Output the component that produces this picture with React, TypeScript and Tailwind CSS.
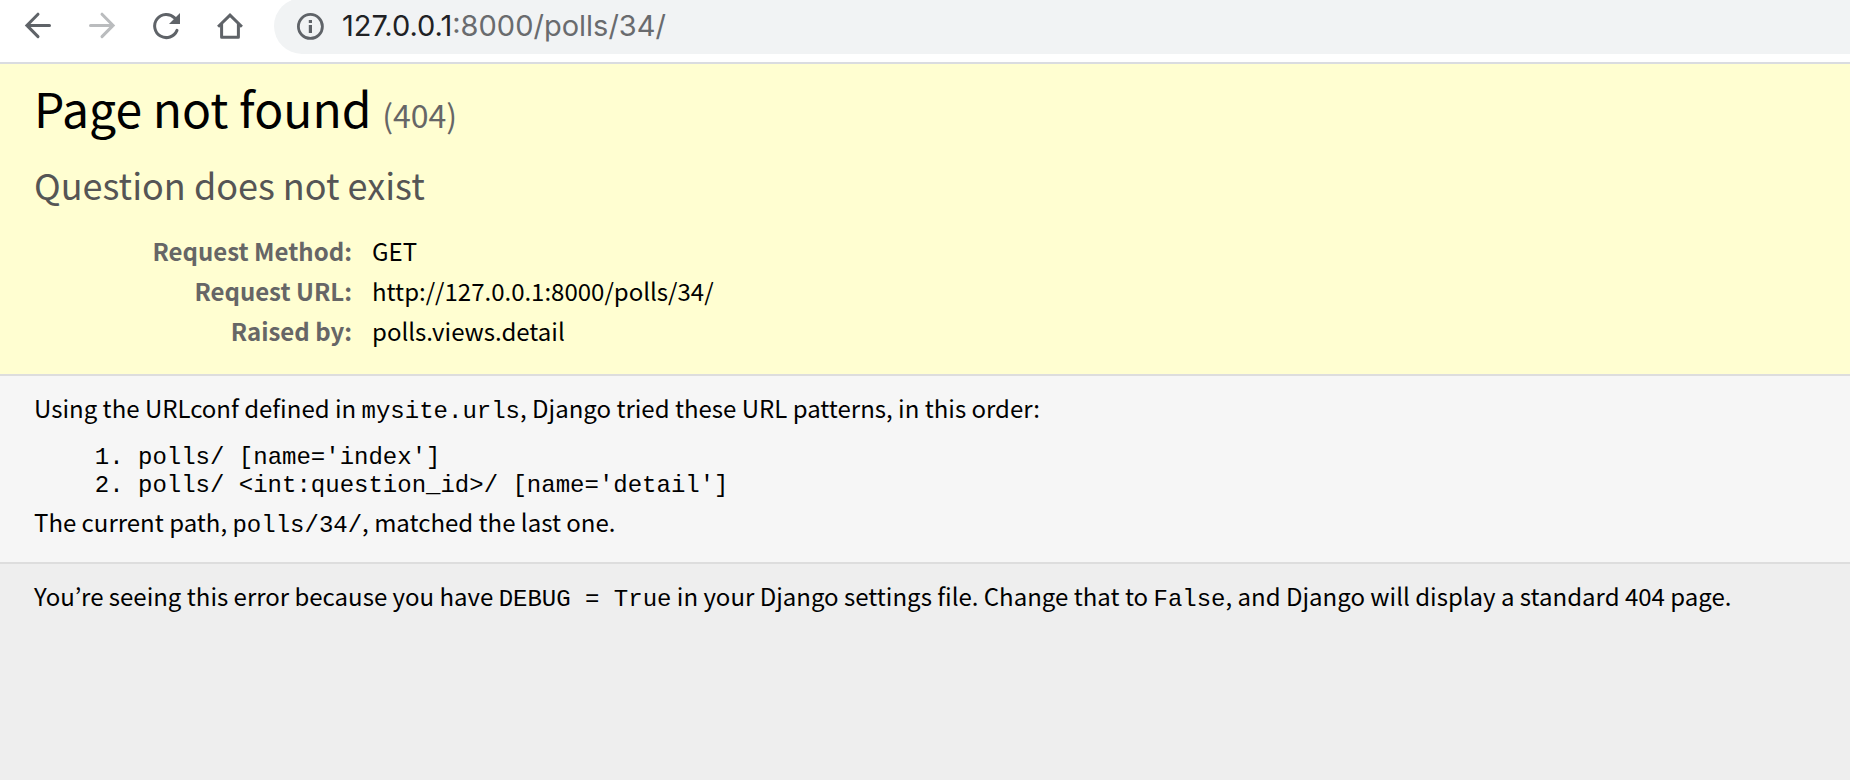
import type { ReactNode } from 'react'

interface RequestInfo {
  label: string
  value: string
}

const requestInfo: RequestInfo[] = [
  { label: 'Request Method:', value: 'GET' },
  { label: 'Request URL:', value: 'http://127.0.0.1:8000/polls/34/' },
  { label: 'Raised by:', value: 'polls.views.detail' },
]

const urlPatterns = [
  { route: 'polls/', name: "[name='index']" },
  { route: 'polls/ <int:question_id>/', name: "[name='detail']" },
]

function BackIcon() {
  return (
    <svg viewBox="0 0 32 32" className="size-8" fill="none" stroke="currentColor" strokeWidth="3" strokeLinecap="round">
      <path d="M27.5 16.4H5M16 5.2L4.9 16.4L16 27.6" />
    </svg>
  )
}

function ForwardIcon() {
  return (
    <svg viewBox="0 0 32 32" className="size-8" fill="none" stroke="currentColor" strokeWidth="3" strokeLinecap="round">
      <path d="M4.5 16.4H27M16 5.2L27.1 16.4L16 27.6" />
    </svg>
  )
}

function ReloadIcon() {
  return (
    <svg viewBox="0 0 32 32" className="size-8" fill="none">
      <path d="M27 21.4A11.6 11.6 0 1 1 24.6 8.9" stroke="currentColor" strokeWidth="3" strokeLinecap="round" />
      <path d="M30 4V15H19Z" fill="currentColor" />
    </svg>
  )
}

function HomeIcon() {
  return (
    <svg viewBox="0 0 32 32" className="size-8" fill="none" stroke="currentColor" strokeWidth="3">
      <path d="M4.1 17.8L16 6.2L27.9 17.8" strokeLinejoin="miter" />
      <path d="M7.6 15V28.2H24.4V15" strokeLinejoin="round" />
    </svg>
  )
}

function InfoIcon() {
  return (
    <svg viewBox="0 0 28 28" className="size-7" fill="none">
      <circle cx="14.4" cy="14.4" r="12" stroke="currentColor" strokeWidth="2.8" />
      <path d="M12.8 8H16V11H12.8ZM12.8 13H16V21H12.8Z" fill="currentColor" />
    </svg>
  )
}

function Code({ children }: { children: ReactNode }) {
  return <code className="font-['Liberation_Mono',monospace] text-2xl leading-none">{children}</code>
}

export default function App() {
  return (
    <div className="flex min-h-screen flex-col bg-[#eee] font-['Noto_Sans_CJK_KR',sans-serif] text-2xl text-black">
      <header className="flex items-start border-b-2 border-[#dadce0] bg-white pb-2 pl-[22px] text-[#5f6368]">
        <nav className="flex gap-8 pt-[9px]">
          <button type="button" aria-label="Back"><BackIcon /></button>
          <button type="button" aria-label="Forward" disabled className="text-[#babcbe]"><ForwardIcon /></button>
          <button type="button" aria-label="Reload"><ReloadIcon /></button>
          <button type="button" aria-label="Home"><HomeIcon /></button>
        </nav>
        <div className="-mt-0.5 ml-7 flex h-14 flex-1 items-center gap-[18px] rounded-l-full bg-[#f1f3f4] pl-[22px]">
          <button type="button" aria-label="View site information"><InfoIcon /></button>
          <div
            role="textbox"
            aria-label="Address"
            tabIndex={0}
            className="font-['Inter',sans-serif] text-[29px] leading-8 text-[#696b6e]"
          >
            <span className="text-[#202124]">127.0.0.1</span>:8000/polls/34/
          </div>
        </div>
      </header>

      <section className="border-b-2 border-[#ddd] bg-[#fffed1] px-[34px] pt-[13px] pb-[23px]">
        <h1 className="text-5xl leading-[60px]">
          Page not found <small className="text-[32px] leading-none text-[#666]">(404)</small>
        </h1>
        <p className="mt-5 text-4xl leading-[54px] text-[#555]">Question does not exist</p>
        <table className="mt-5 border-collapse">
          <tbody>
            {requestInfo.map((row) => (
              <tr key={row.label} className="leading-10">
                <th scope="row" className="w-[318px] text-right font-bold text-[#666]">
                  {row.label}
                </th>
                <td className="pl-5">{row.value}</td>
              </tr>
            ))}
          </tbody>
        </table>
      </section>

      <main className="border-b-2 border-[#ddd] bg-[#f6f6f6] px-[34px] pt-3 pb-5">
        <p className="leading-10">
          Using the URLconf defined in <Code>mysite.urls</Code>, Django tried these URL patterns, in this order:
        </p>
        <ol className="mt-4 mb-0.5 ml-[104px] list-decimal font-['Liberation_Mono',monospace] leading-7">
          {urlPatterns.map((pattern) => (
            <li key={pattern.name}>
              {pattern.route} {pattern.name}
            </li>
          ))}
        </ol>
        <p className="leading-10">
          The current path, <Code>polls/34/</Code>, matched the last one.
        </p>
      </main>

      <footer className="px-[34px] pt-3 pb-4">
        <p className="leading-10">
          You’re seeing this error because you have <Code>DEBUG = True</Code> in your Django settings file. Change that
          to <Code>False</Code>, and Django will display a standard 404 page.
        </p>
      </footer>
    </div>
  )
}
